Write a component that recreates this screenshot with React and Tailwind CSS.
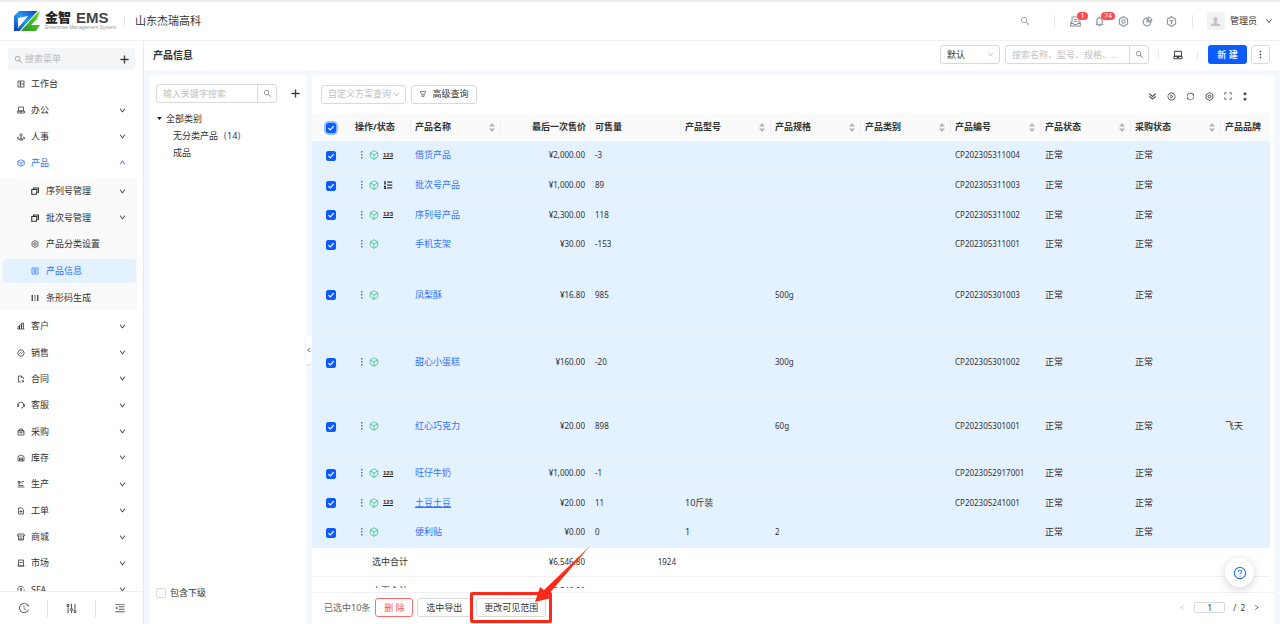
import clsx from 'clsx';
import {
  AiOutlineBell, AiOutlineDoubleRight, AiOutlineDown, AiOutlineFilter, AiOutlineHistory, AiOutlineLeft,
  AiOutlineMenuFold, AiOutlineMore, AiOutlinePieChart, AiOutlinePlayCircle, AiOutlinePlus,
  AiOutlineQuestionCircle, AiOutlineRight, AiOutlineSearch, AiOutlineSync, AiOutlineUp,
} from 'react-icons/ai';
import { Box, ListOrdered } from 'lucide-react';

// Line icons on a 16 unit grid
const ICONS = {
  workbench: 'M2 2H14V14H2ZM7 2V14M7 8H14M4 5H5M4 8H5',
  office: 'M3 2H13V10H3ZM1 10H15V14H1ZM6 12H10',
  people: 'M8 1.500A2 2 0 0 1 8 6A2 2 0 0 1 8 1.500M8 6V10M4 8.500A2 1.600 0 0 0 1.500 12H6M12 8.500A2 1.600 0 0 1 14.500 12H10M5 14H11L8 10Z',
  product: 'M8 1.500 14.500 4.500V11.500L8 14.500 1.500 11.500V4.500ZM1.500 4.500 8 8 14.500 4.500M8 8V14M4 9V10M12 9V10',
  nut: 'M8 1 14 4.500V11.500L8 15 2 11.500V4.500ZM8 5.500A2.500 2.500 0 0 1 8 10.500A2.500 2.500 0 0 1 8 5.500',
  info: 'M2 2H14V14H2ZM5 6H11M5 10H11M8 4V12',
  barcode: 'M2 2V14M3 2V14M8 2V14M13 2V14M14 2V14',
  client: 'M1 14H15M2 14V9H5V14M5 14V6H9V14M9 14V2H13V14M11 5V6M11 9V10',
  sale: 'M8 1.500 12 3 14.500 8 12 13 8 14.500 4 13 1.500 8 4 3ZM5 9 7 7 9 9 11 7',
  contract: 'M9 14H3V2H9L13 6V8M9 2V6M10 11H13V14H10',
  service: 'M3 11V7A5 5 0 0 1 13 7V11M3 7H1V11H3M13 7H15V11H13M13 11A5 4 0 0 1 8 14',
  purchase: 'M2 5H14V14H2ZM5 5V2H11V5M2 8H14M6 10H10',
  stock: 'M2 14V5L8 2 14 5V14ZM5 14V8H11V14M5 11H11',
  produce: 'M1 14H15M3 11H13M2 3H6V6H2ZM6 4 11 7M10 3H14M4 6V11',
  order: 'M3 2H10L13 5V14H3ZM8 6V12M5 9H11',
  shop: 'M2 2H14L15 6H1ZM3 6V14H13V6M6 14V10H10V14',
  market: 'M3 2H13V14H3ZM5 7H11M1 14H15',
  sfa: 'M2 9A6 6 0 0 1 13 4M14 7A6 6 0 0 1 3 12M6 5H10M6 8H10M8 5V11',
  inbox: 'M3 9H1V14.500H15V9H13M3 9V1.500H13V9M5.500 5H10.500M5.500 8H10.500M1 11H5L6 12.500H10L11 11H15',
  apps: 'M8 1 14 4.500V11.500L8 15 2 11.500V4.500ZM5 5.500 8 8 11 5.500M8 8V11.500',
  sliders: 'M3 6V15M3 2A1.500 1.500 0 0 1 3 5A1.500 1.500 0 0 1 3 2M8 1V8M8 12V15M8 8A1.500 1.500 0 0 1 8 11A1.500 1.500 0 0 1 8 8M13 1V11M13 11A1.500 1.500 0 0 1 13 14A1.500 1.500 0 0 1 13 11',
  expand: 'M1.500 5V1.500H5M11 1.500H14.500V5M14.500 11V14.500H11M5 14.500H1.500V11',
  device: 'M2.500 2H13.500V10H2.500ZM1.500 14V10H14.500V14ZM6 12H10',
};

function Icon({ name, className }) {
  return (
    <svg viewBox="0 0 16 16" className={className} fill="none" stroke="currentColor" strokeWidth="1.500" aria-hidden="true">
      {name === 'stack' ? (
        <>
          <path d="M5 4V2H15V11H13" strokeWidth="2.400" />
          <path d="M1.500 5H12L11 14.500H1.500Z" strokeWidth="2.200" />
        </>
      ) : (
        <path d={ICONS[name]} />
      )}
    </svg>
  );
}

const MENU_TOP = [
  { name: '工作台', icon: 'workbench' },
  { name: '办公', icon: 'office', more: true },
  { name: '人事', icon: 'people', more: true },
  { name: '产品', icon: 'product', more: true, open: true },
];

const MENU_PRODUCT = [
  { name: '序列号管理', icon: 'stack', more: true },
  { name: '批次号管理', icon: 'stack', more: true },
  { name: '产品分类设置', icon: 'nut' },
  { name: '产品信息', icon: 'info', active: true },
  { name: '条形码生成', icon: 'barcode' },
];

const MENU_REST = [
  { name: '客户', icon: 'client' },
  { name: '销售', icon: 'sale' },
  { name: '合同', icon: 'contract' },
  { name: '客服', icon: 'service' },
  { name: '采购', icon: 'purchase' },
  { name: '库存', icon: 'stock' },
  { name: '生产', icon: 'produce' },
  { name: '工单', icon: 'order' },
  { name: '商城', icon: 'shop' },
  { name: '市场', icon: 'market' },
  { name: 'SFA', icon: 'sfa' },
].map(item => ({ ...item, more: true }));

const COLUMNS = [
  { key: 'name', title: '产品名称', sort: true },
  { key: 'price', title: '最后一次售价', right: true },
  { key: 'stock', title: '可售量' },
  { key: 'model', title: '产品型号', sort: true },
  { key: 'spec', title: '产品规格', sort: true },
  { key: 'category', title: '产品类别', sort: true },
  { key: 'code', title: '产品编号', sort: true },
  { key: 'status', title: '产品状态', sort: true },
  { key: 'purchase', title: '采购状态', sort: true },
  { key: 'brand', title: '产品品牌' },
];

const ROWS = [
  { name: '借货产品', price: '¥2,000.00', stock: '-3', code: 'CP202305311004', mark: 'serial', height: 'h-[29px]' },
  { name: '批次号产品', price: '¥1,000.00', stock: '89', code: 'CP202305311003', mark: 'batch', height: 'h-[30px]' },
  { name: '序列号产品', price: '¥2,300.00', stock: '118', code: 'CP202305311002', mark: 'serial', height: 'h-[29px]' },
  { name: '手机支架', price: '¥30.00', stock: '-153', code: 'CP202305311001', height: 'h-[30px]' },
  { name: '凤梨酥', price: '¥16.80', stock: '985', spec: '500g', code: 'CP202305301003', height: 'h-[71px]' },
  { name: '甜心小蛋糕', price: '¥160.00', stock: '-20', spec: '300g', code: 'CP202305301002', height: 'h-[64px]' },
  { name: '红心巧克力', price: '¥20.00', stock: '898', spec: '60g', code: 'CP202305301001', brand: '飞天', height: 'h-[64px]' },
  { name: '旺仔牛奶', price: '¥1,000.00', stock: '-1', code: 'CP2023052917001', mark: 'serial', height: 'h-[30px]' },
  { name: '土豆土豆', price: '¥20.00', stock: '11', model: '10斤装', code: 'CP202305241001', mark: 'serial', underline: true, height: 'h-[29px]' },
  { name: '便利贴', price: '¥0.00', stock: '0', model: '1', spec: '2', height: 'h-[30px]' },
];

const TOTALS = [
  { title: '选中合计', price: '¥6,546.80', stock: '1924' },
  { title: '本页合计', price: '¥6,546.80' },
];

function Logo() {
  return (
    <svg viewBox="0 0 26 21" className="w-[26px] h-[21px]" aria-hidden="true">
      <defs>
        <linearGradient id="logo-blue" x1="0" y1="1" x2="1" y2="0">
          <stop offset="0" stopColor="#0a3cb4" />
          <stop offset="0.500" stopColor="#2a9df0" />
          <stop offset="1" stopColor="#0a3cc8" />
        </linearGradient>
        <linearGradient id="logo-green" x1="0" y1="1" x2="1" y2="0">
          <stop offset="0" stopColor="#1f8f2a" />
          <stop offset="1" stopColor="#6be01a" />
        </linearGradient>
      </defs>
      <path d="M5 0H24L6 20H0V5Z" fill="url(#logo-blue)" />
      <path d="M4 7 14 5 4 17Z" fill="#fff" />
      <path d="M26 0 23 8 17 14H26L22 20H7L22 3Z" fill="url(#logo-green)" />
      <path d="M24 0 6 20" stroke="#fff" strokeWidth="0.800" />
    </svg>
  );
}

function Checkbox({ label, checked, focused }) {
  return (
    <span className={clsx('inline-grid rounded-[3px] align-middle', focused && 'ring-2 ring-[#8fbcff]')}>
      <input
        type="checkbox"
        aria-label={label}
        defaultChecked={checked}
        className="peer col-start-1 row-start-1 appearance-none size-[10px] rounded-[2px] border border-[#d9d9d9] bg-white checked:bg-[#0b5cff] checked:border-[#0b5cff]"
      />
      <svg viewBox="0 0 10 10" className="col-start-1 row-start-1 size-[10px] pointer-events-none hidden peer-checked:block">
        <path d="M2.400 5.100 4.300 7 7.700 3.200" fill="none" stroke="#fff" strokeWidth="1.200" />
      </svg>
    </span>
  );
}

function MenuItem({ item, sub }) {
  const Arrow = item.open ? AiOutlineUp : AiOutlineDown;
  return (
    <a
      href="#"
      className={clsx(
        'flex items-center rounded-[4px]',
        sub ? 'ml-[3px] mr-[2px] pl-[28px] pr-[10px] gap-[7px] my-[1px]' : 'mr-[7px] pl-[17px] pr-[10px] gap-[6px]',
        item.active && 'bg-[#e4f1ff]',
        item.active || item.open ? 'text-[#2f73ff]' : 'text-[#333]'
      )}
    >
      <Icon name={item.icon} className="size-[8px] shrink-0" />
      <span className="flex-1">{item.name}</span>
      {item.more && <Arrow className="size-[7px] stroke-[40] stroke-current" />}
    </a>
  );
}

function Sidebar() {
  return (
    <aside className="w-[144px] shrink-0 flex flex-col min-h-0 bg-white border-r border-[#e6e9ee]">
      <div className="flex items-center h-[22px] mt-[7px] mx-[8px] rounded-[4px] bg-[#f4f5f7] shrink-0">
        <AiOutlineSearch className="size-[9px] ml-[6px] text-[#999]" />
        <input
          aria-label="搜索菜单"
          placeholder="搜索菜单"
          className="flex-1 min-w-0 px-[2px] bg-transparent outline-none placeholder:text-[#b4b7bd]"
        />
        <button aria-label="添加" className="w-[22px] flex justify-center">
          <AiOutlinePlus className="size-[11px] stroke-[40] stroke-current" />
        </button>
      </div>

      <nav className="flex-1 min-h-0 overflow-hidden pt-px">
        <div className="grid auto-rows-fr h-[105px]">
          {MENU_TOP.map(item => <MenuItem key={item.name} item={item} />)}
        </div>
        <div className="grid auto-rows-fr h-[133px] my-[2px] mr-[5px] bg-[#fafafa]">
          {MENU_PRODUCT.map(item => <MenuItem key={item.name} item={item} sub />)}
        </div>
        <div className="grid auto-rows-fr h-[290px]">
          {MENU_REST.map(item => <MenuItem key={item.name} item={item} />)}
        </div>
      </nav>

      <div className="h-[33px] shrink-0 flex items-center border-t border-[#eceef1] bg-white text-[#555] divide-x divide-[#e3e3e3]">
        <button aria-label="历史" className="flex-1 h-[17px] grid place-items-center"><AiOutlineHistory className="size-[12px]" /></button>
        <button aria-label="筛选" className="flex-1 h-[17px] grid place-items-center"><Icon name="sliders" className="size-[11px]" /></button>
        <button aria-label="收起菜单" className="flex-1 h-[17px] grid place-items-center"><AiOutlineMenuFold className="size-[12px]" /></button>
      </div>
    </aside>
  );
}

function Divider() {
  return <span className="w-px h-[13px] bg-[#e3e5e8]" />;
}

function Badge({ children }) {
  return (
    <span className="absolute left-[7px] top-[-4px] h-[8px] min-w-[11px] px-[3px] rounded-full bg-[#ff4d4f] text-white text-[7px] leading-[8px] text-center">
      {children}
    </span>
  );
}

function Header() {
  return (
    <header className="h-[41px] shrink-0 flex items-center border-t-2 border-t-[#eeeeee] border-b border-b-[#f0f1f3] bg-white pl-[14px] pr-[7px]">
      <Logo />
      <div className="ml-[5px] w-[70px]">
        <div className="flex items-center gap-[5px] text-[#222] leading-[13px] font-bold">
          <span className="text-[13px] font-black whitespace-nowrap">金智</span>
          <span className="font-['Liberation_Sans',sans-serif] text-[15px] text-[#444]">EMS</span>
        </div>
        <div className="font-['Liberation_Sans',sans-serif] text-[5px] leading-[7px] text-[#999] whitespace-nowrap">Enterprise Management System</div>
      </div>
      <span className="w-px h-[11px] bg-[#e3e5e8] ml-[9px] mr-[10px]" />
      <span className="text-[11px]">山东杰瑞高科</span>

      <div className="ml-auto flex items-center text-[#8a8f99]">
        <button aria-label="搜索" className="mr-[24px]"><AiOutlineSearch className="size-[10px]" /></button>
        <Divider />
        <div className="flex items-center gap-[13px] mx-[15px]">
          <button aria-label="消息" className="relative"><Icon name="inbox" className="size-[11px]" /><Badge>1</Badge></button>
          <button aria-label="通知" className="relative"><AiOutlineBell className="size-[11px] stroke-[30] stroke-current" /><Badge>74</Badge></button>
          <button aria-label="设置"><Icon name="nut" className="size-[11px]" /></button>
          <button aria-label="统计"><AiOutlinePieChart className="size-[11px] stroke-[30] stroke-current" /></button>
          <button aria-label="应用"><Icon name="apps" className="size-[11px]" /></button>
        </div>
        <Divider />
        <span className="size-[18px] ml-[14px] mr-[5px] rounded-[2px] bg-[#f2f2f2] grid place-items-center">
          <svg viewBox="0 0 12 12" className="size-[11px] fill-[#c4c4c4]">
            <path d="M6 1a2.600 2.800 0 0 1 1.400 5.100V7.600L11 9v2H1V9L4.600 7.600V6.100A2.600 2.800 0 0 1 6 1Z" />
          </svg>
        </span>
        <span className="text-[#333]">管理员</span>
        <AiOutlineDown className="size-[8px] ml-[8px] text-[#333]" />
      </div>
    </header>
  );
}

function SearchBox({ label, placeholder, className }) {
  return (
    <div className={clsx('flex h-[19px] rounded-[3px] border border-[#d9d9d9] bg-white', className)}>
      <input
        aria-label={label}
        placeholder={placeholder}
        className="flex-1 min-w-0 pl-[6px] bg-transparent outline-none placeholder:text-[#bfbfbf]"
      />
      <button aria-label={`${label}按钮`} className="w-[19px] border-l border-[#d9d9d9] grid place-items-center text-[#777]">
        <AiOutlineSearch className="size-[9px]" />
      </button>
    </div>
  );
}

function SelectBox({ label, option, className }) {
  return (
    <div className={clsx('grid items-center h-[19px] rounded-[3px] border border-[#d9d9d9] bg-white', className)}>
      <select aria-label={label} className="col-start-1 row-start-1 h-full w-full appearance-none bg-transparent pl-[6px] outline-none">
        <option>{option}</option>
      </select>
      <AiOutlineDown className="col-start-1 row-start-1 justify-self-end size-[7px] mr-[5px] text-[#aaa] pointer-events-none" />
    </div>
  );
}

function TitleBar() {
  return (
    <div className="h-[29px] shrink-0 flex items-center bg-white pl-[9px] pr-[10px] pb-[2px]">
      <h1 className="text-[10px] font-bold">产品信息</h1>
      <div className="ml-auto flex items-center">
        <SelectBox label="方案" option="默认" className="w-[60px] mr-[5px]" />
        <SearchBox label="搜索" placeholder="搜索名称、型号、规格、..." className="w-[144px]" />
        <span className="w-px h-[8px] bg-[#e8e8e8] ml-[9px] mr-[14px]" />
        <button aria-label="设备"><Icon name="device" className="size-[10px]" /></button>
        <span className="w-px h-[8px] bg-[#e8e8e8] ml-[14px] mr-[10px]" />
        <button className="w-[39px] h-[19px] rounded-[3px] bg-[#0b5cff] text-white font-medium">新 建</button>
        <button aria-label="更多" className="w-[19px] h-[19px] ml-[4px] rounded-[3px] border border-[#d9d9d9] grid place-items-center">
          <AiOutlineMore className="size-[11px] stroke-[40] stroke-current" />
        </button>
      </div>
    </div>
  );
}

function CategoryPanel() {
  return (
    <section className="w-[156px] shrink-0 flex flex-col bg-white rounded-t-[4px] pt-[9px] pl-[6px] pr-[5px]">
      <div className="flex items-center">
        <SearchBox label="分类" placeholder="输入关键字搜索" className="w-[121px]" />
        <button aria-label="新增分类" className="ml-auto"><AiOutlinePlus className="size-[11px] stroke-[40] stroke-current" /></button>
      </div>
      <ul className="mt-[7px] leading-[17px]">
        <li>
          <span className="flex items-center gap-[4px]">
            <svg viewBox="0 0 6 4" className="w-[5px] h-[3px] ml-[1px]"><path d="M0 0H6L3 4Z" /></svg>
            全部类别
          </span>
          <ul className="pl-[17px]">
            <li>无分类产品（14）</li>
            <li>成品</li>
          </ul>
        </li>
      </ul>
      <label className="mt-auto mb-[25px] flex items-center gap-[4px]">
        <Checkbox label="包含下级" />
        包含下级
      </label>
    </section>
  );
}

function Sorter() {
  return (
    <svg viewBox="0 0 6 9" className="w-[6px] h-[9px] mr-[1px] fill-[#b5b5b5]">
      <path d="M3 0 6 3.500H0ZM3 9 0 5.500H6Z" />
    </svg>
  );
}

function StateIcons({ mark }) {
  return (
    <span className="flex items-center gap-[4px] pl-[11px]">
      <svg viewBox="0 0 2 8" className="w-[2px] h-[8px] mr-[2px] fill-[#2f73ff]">
        <path d="M0 0H1.500V1.500H0ZM0 3H1.500V4.500H0ZM0 6H1.500V7.500H0Z" />
      </svg>
      <Box className="size-[10px] text-[#3cc48a]" />
      {mark === 'serial' && (
        <span className="font-['Liberation_Sans',sans-serif] text-[6px] leading-[6px] font-bold border-b border-[#222] text-[#222]">123</span>
      )}
      {mark === 'batch' && <ListOrdered className="size-[10px] stroke-[3]" />}
    </span>
  );
}

function ProductTable() {
  return (
    <table className="w-full table-fixed border-collapse">
      <colgroup>
        <col className="w-[38px]" />
        <col className="w-[60px]" />
        {COLUMNS.map(col => <col key={col.key} className={col.key === 'brand' ? '' : 'w-[90px]'} />)}
      </colgroup>
      <thead>
        <tr className="h-[28px] bg-[#fafafa]">
          <th><Checkbox label="全选" checked focused /></th>
          <th className="pl-[5px] text-left font-bold whitespace-nowrap">操作/状态</th>
          {COLUMNS.map(col => (
            <th key={col.key} className="font-bold whitespace-nowrap">
              <span className={clsx('flex items-center h-[14px] border-l border-[#eeeeee] px-[4px]', col.right ? 'justify-end' : 'justify-between')}>
                {col.title}
                {col.sort && <Sorter />}
              </span>
            </th>
          ))}
        </tr>
      </thead>
      <tbody>
        {ROWS.map(row => (
          <tr key={row.name} className={clsx('bg-[#e4f1ff] border-b border-[#edf1f6]', row.height)}>
            <td className="text-center"><Checkbox label={row.name} checked /></td>
            <td><StateIcons mark={row.mark} /></td>
            {COLUMNS.map(col => (
              <td key={col.key} className={clsx('px-[5px] whitespace-nowrap', col.right && 'text-right')}>
                {col.key === 'name' && (
                  <a href="#" className={clsx('text-[#2f73ff]', row.underline && 'underline')}>{row.name}</a>
                )}
                {['price', 'stock', 'spec', 'code'].includes(col.key) && <span className="text-[8px]">{row[col.key]}</span>}
                {['model', 'brand'].includes(col.key) && row[col.key]}
                {['status', 'purchase'].includes(col.key) && '正常'}
              </td>
            ))}
          </tr>
        ))}
      </tbody>
      <tfoot>
        {TOTALS.map(total => (
          <tr key={total.title} className="h-[29px] border-b border-[#f0f0f0]">
            <td />
            <td colSpan={2} className="pl-[22px]">{total.title}</td>
            <td className="px-[5px] text-right text-[8px]">{total.price}</td>
            <td className="px-[4px] text-right text-[8px]">{total.stock}</td>
            <td colSpan={7} />
          </tr>
        ))}
      </tfoot>
    </table>
  );
}

function SelectionBar() {
  return (
    <div className="h-[32px] shrink-0 flex items-center border-t border-[#f0f0f0] pl-[12px] pr-[14px] pb-[2px]">
      <span className="text-[#666] mr-[5px]">已选中10条</span>
      <button className="w-[38px] h-[19px] rounded-[3px] border border-[#ff6b6d] text-[#ff4d4f]">删 除</button>
      <button className="w-[54px] h-[19px] ml-[4px] rounded-[3px] border border-[#d9d9d9]">选中导出</button>
      <div className="relative ml-[5px]">
        <button className="w-[70px] h-[19px] rounded-[3px] border border-[#d9d9d9]">更改可见范围</button>
        {/* callout around the visibility button */}
        <span className="absolute -inset-[6px] border-[3px] border-[#ff2a1a] rounded-[2px] pointer-events-none" />
        <svg viewBox="0 0 56 58" className="absolute left-[58px] top-[-53px] w-[56px] h-[58px] pointer-events-none">
          <path d="M56 1 14 50 17 53 1 57 6 42 10 45Z" fill="#ff2a1a" />
        </svg>
      </div>
      <div className="ml-auto flex items-center text-[8px]">
        <button aria-label="上一页"><AiOutlineLeft className="size-[7px] text-[#bbb]" /></button>
        <input aria-label="页码" defaultValue="1" className="w-[31px] h-[11px] mx-[8px] rounded-[2px] border border-[#d9d9d9] text-center outline-none" />
        <span className="mr-[8px] whitespace-pre">/  2</span>
        <button aria-label="下一页"><AiOutlineRight className="size-[7px]" /></button>
      </div>
    </div>
  );
}

function TablePanel() {
  return (
    <section className="relative flex-1 min-w-0 flex flex-col bg-white rounded-t-[4px]">
      <div className="h-[38px] shrink-0 flex items-center pl-[9px] pr-[26px]">
        <SelectBox label="自定义方案查询" option="自定义方案查询" className="w-[85px] text-[#bfbfbf]" />
        <button className="w-[66px] h-[19px] ml-[5px] rounded-[3px] border border-[#d9d9d9] flex items-center justify-center gap-[5px]">
          <AiOutlineFilter className="size-[8px]" />
          高级查询
        </button>
        <div className="ml-auto flex items-center gap-[10px] pt-[4px]">
          <button aria-label="展开"><AiOutlineDoubleRight className="size-[9px] rotate-90 stroke-[40] stroke-current" /></button>
          <button aria-label="播放"><AiOutlinePlayCircle className="size-[9px]" /></button>
          <button aria-label="刷新"><AiOutlineSync className="size-[9px]" /></button>
          <button aria-label="列设置"><Icon name="nut" className="size-[9px]" /></button>
          <button aria-label="全屏"><Icon name="expand" className="size-[8px]" /></button>
          <button aria-label="行高">
            <svg viewBox="0 0 6 9" className="w-[6px] h-[9px] fill-current"><path d="M3 0 5 2.500H3.400V3.500H2.600V2.500H1ZM3 9 5 6.500H3.400V5.500H2.600V6.500H1Z" /></svg>
          </button>
        </div>
      </div>
      <div className="flex-1 min-h-0 overflow-hidden mb-[4px] pr-[4px]">
        <ProductTable />
      </div>
      <SelectionBar />
      <button aria-label="帮助" className="absolute right-[20px] bottom-[37px] size-[29px] rounded-full bg-white shadow-[0_2px_10px_rgba(0,0,0,0.18)] grid place-items-center text-[#1f6bff]">
        <AiOutlineQuestionCircle className="size-[14px]" />
      </button>
    </section>
  );
}

export default function App() {
  return (
    <div className="h-screen flex flex-col overflow-hidden bg-white font-['Noto_Sans','Noto_Sans_CJK_SC',sans-serif] text-[9px] leading-[12px] text-[#333]">
      <Header />
      <div className="flex-1 min-h-0 flex">
        <Sidebar />
        <main className="flex-1 min-w-0 flex flex-col bg-[#f5f8fd]">
          <TitleBar />
          <div className="flex-1 min-h-0 flex pt-[5px] px-[6px]">
            <CategoryPanel />
            <div className="w-[6px] shrink-0 flex items-center">
              <button aria-label="收起分类" className="w-full h-[28px] bg-white rounded-r-[2px] shadow-sm grid place-items-center text-[#666]">
                <AiOutlineLeft className="size-[6px] stroke-[40] stroke-current" />
              </button>
            </div>
            <TablePanel />
          </div>
        </main>
      </div>
    </div>
  );
}
